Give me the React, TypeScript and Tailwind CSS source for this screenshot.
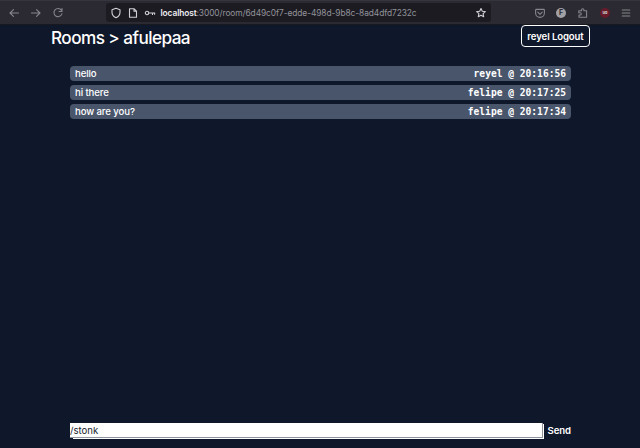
import type { ReactNode } from "react";

const messages = [
  { text: "hello", meta: "reyel @ 20:16:56" },
  { text: "hi there", meta: "felipe @ 20:17:25" },
  { text: "how are you?", meta: "felipe @ 20:17:34" },
];

function Icon({ children, className = "" }: { children: ReactNode; className?: string }) {
  return (
    <svg className={"size-3 shrink-0 " + className} viewBox="0 0 12 12" fill="none" stroke="currentColor" strokeWidth="1.1" strokeLinecap="round" strokeLinejoin="round">
      {children}
    </svg>
  );
}

export default function App() {
  return (
    <div className="flex h-[448px] w-[640px] flex-col overflow-hidden bg-[#0f172a] font-['Inter','Liberation_Sans',sans-serif] text-[9.6px] leading-[14px] whitespace-nowrap text-white">
      <header className="flex h-[25px] shrink-0 items-center border-t border-b border-t-[#35353e] border-b-[#18181f] bg-[#2b2a33] pl-2 text-[#85858b]">
        <Icon><path d="M10.5 6H2M5.5 2.7 2 6l3.5 3.3" /></Icon>
        <Icon className="ml-[10px]"><path d="M1.5 6H10M6.5 2.7 10 6 6.5 9.3" /></Icon>
        <Icon className="ml-[10px]"><path d="M9.4 3.2A4.1 4.1 0 1 0 10 6.7M10 1.5v3H7" /></Icon>
        <div className="ml-[42px] flex h-[19px] w-[385px] items-center rounded-[3px] bg-[#1c1b22] pr-[4px] pl-[4px] text-[#d0d0d5]">
          <Icon><path d="M6 1.3 10 2.7v2.5c0 2.5-1.5 4.4-4 5.6-2.5-1.2-4-3.1-4-5.6V2.7Z" /></Icon>
          <Icon className="ml-[5px]"><path d="M2.5 1.8h4.7l2.3 2.3v6.1h-7ZM7 1.8v2.5h2.5" /></Icon>
          <Icon className="ml-[5px]"><circle cx="3" cy="6" r="1.7" /><path d="M4.8 6h6M8.5 6v1.5M10.6 6v1.2" /></Icon>
          <div className="ml-[4.5px] flex items-center pt-px text-[8.4px] text-[#929299]">
            <span className="w-[36px] font-semibold tracking-[-0.1px] text-[#ededf0]">localhost</span>
            <span className="tracking-[-0.08px]">:3000/room/6d49c0f7-edde-498d-9b8c-8ad4dfd7232c</span>
          </div>
          <Icon className="ml-auto"><path d="m6 1.5 1.3 2.7 3 .4-2.2 2.1.6 3L6 8.2 3.3 9.7l.6-3-2.2-2.1 3-.4Z" /></Icon>
        </div>
        <Icon className="ml-[43px]"><path d="M2.4 2.4h7.2q.8 0 .8.8V6a4.4 4.4 0 0 1-8.8 0V3.2q0-.8.8-.8ZM3.8 5.2 6 7.3l2.2-2.1" /></Icon>
        <div className="ml-[10px] flex size-[10px] items-center justify-center rounded-full bg-[#a0a0a5] text-[7px] leading-none font-bold text-[#2b2a33]">F</div>
        <Icon className="ml-[11px]"><path d="M1.8 3.8h2.7V2.9a1.2 1.2 0 0 1 2.4 0v.9h2.7v6.5H2V8h1.2a1.1 1.1 0 0 0 0-2.2H1.8Z" /></Icon>
        <div className="ml-[11px] flex size-[10px] items-center justify-center rounded-full bg-[#651b2a] text-[4px] leading-none font-bold text-[#ddd]">uo</div>
        <Icon className="ml-[10px]"><path d="M2.2 3h7.6M2.2 6h7.6M2.2 9h7.6" /></Icon>
      </header>
      <div className="flex h-[24px] shrink-0 items-start justify-between pr-[50px] pl-[51px]">
        <h1 className="text-[17.2px] leading-[25px] font-medium tracking-[-0.57px]">{"Rooms > afulepaa"}</h1>
        <button className="flex h-[22px] w-[69px] items-center justify-center rounded-[4px] border-[1.5px] border-white pt-px font-semibold tracking-[-0.1px]">
          reyel Logout
        </button>
      </div>
      <main className="mt-[17px] flex flex-1 flex-col gap-[4px] pr-[69px] pl-[70px]">
        {messages.map((m) => (
          <div key={m.meta} className="flex h-[15px] shrink-0 items-center justify-between rounded-[4px] bg-[#49556b] px-[5px]">
            <span className="font-medium tracking-[-0.1px]">{m.text}</span>
            <span className="font-['DejaVu_Sans_Mono',monospace] font-bold">{m.meta}</span>
          </div>
        ))}
      </main>
      <form className="flex h-[25px] shrink-0 items-start pl-[70px]">
        <div className="grid h-4 w-[474px]">
          <div className="col-start-1 row-start-1 mt-px ml-[3px] bg-white" />
          <div className="z-10 col-start-1 row-start-1 mr-px mb-px flex items-center border-r border-b border-[#8d929d] bg-white pt-px leading-[13px] text-[#20242e]">
            /stonk
          </div>
        </div>
        <button className="ml-[3.5px] pt-px font-semibold tracking-[-0.1px]">Send</button>
      </form>
    </div>
  );
}
